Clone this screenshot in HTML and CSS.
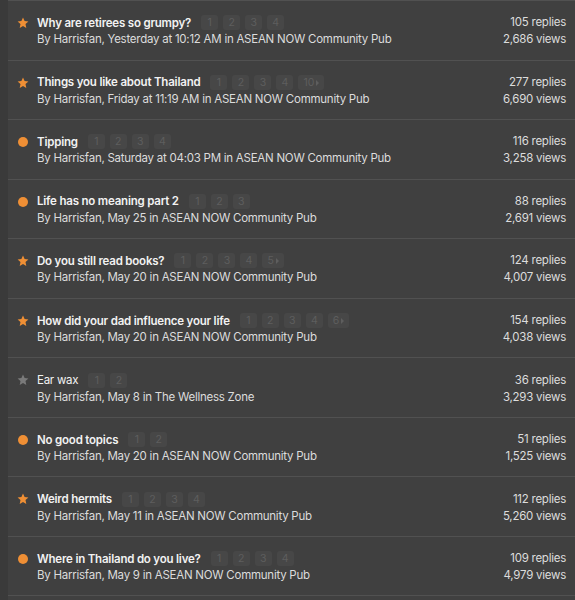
FILE: index.html
```html
<!DOCTYPE html>
<html>
	<head>
		<title>Topics by Harrisfan</title>
		<link rel="stylesheet" href="styles.css">
	</head>
	<body>
		<div class="wrap">
			<ul class="topics">
				<li class="topic">
					<span class="mark star"><svg viewBox="0 0 12 12"><path d="M6 .6l1.6 3.5 3.8.4-2.9 2.6.8 3.8L6 9l-3.3 1.9.8-3.8L.6 4.5l3.8-.4z"/></svg></span>
					<div class="main">
						<div class="title"><a href="#">Why are retirees so grumpy?</a>
							<span class="pages"><span>1</span><span>2</span><span>3</span><span>4</span></span>
						</div>
						<div class="meta">By Harrisfan, Yesterday at 10:12 AM in ASEAN NOW Community Pub</div>
					</div>
					<div class="stats"><div>105 replies</div><div>2,686 views</div></div>
				</li>
				<li class="topic">
					<span class="mark star"><svg viewBox="0 0 12 12"><path d="M6 .6l1.6 3.5 3.8.4-2.9 2.6.8 3.8L6 9l-3.3 1.9.8-3.8L.6 4.5l3.8-.4z"/></svg></span>
					<div class="main">
						<div class="title"><a href="#">Things you like about Thailand</a>
							<span class="pages"><span>1</span><span>2</span><span>3</span><span>4</span><span class="last">10<i></i></span></span>
						</div>
						<div class="meta">By Harrisfan, Friday at 11:19 AM in ASEAN NOW Community Pub</div>
					</div>
					<div class="stats"><div>277 replies</div><div>6,690 views</div></div>
				</li>
				<li class="topic">
					<span class="mark dot"></span>
					<div class="main">
						<div class="title"><a href="#">Tipping</a>
							<span class="pages"><span>1</span><span>2</span><span>3</span><span>4</span></span>
						</div>
						<div class="meta">By Harrisfan, Saturday at 04:03 PM in ASEAN NOW Community Pub</div>
					</div>
					<div class="stats"><div>116 replies</div><div>3,258 views</div></div>
				</li>
				<li class="topic">
					<span class="mark dot"></span>
					<div class="main">
						<div class="title"><a href="#">Life has no meaning part 2</a>
							<span class="pages"><span>1</span><span>2</span><span>3</span></span>
						</div>
						<div class="meta">By Harrisfan, May 25 in ASEAN NOW Community Pub</div>
					</div>
					<div class="stats"><div>88 replies</div><div>2,691 views</div></div>
				</li>
				<li class="topic">
					<span class="mark star"><svg viewBox="0 0 12 12"><path d="M6 .6l1.6 3.5 3.8.4-2.9 2.6.8 3.8L6 9l-3.3 1.9.8-3.8L.6 4.5l3.8-.4z"/></svg></span>
					<div class="main">
						<div class="title"><a href="#">Do you still read books?</a>
							<span class="pages"><span>1</span><span>2</span><span>3</span><span>4</span><span class="last">5<i></i></span></span>
						</div>
						<div class="meta">By Harrisfan, May 20 in ASEAN NOW Community Pub</div>
					</div>
					<div class="stats"><div>124 replies</div><div>4,007 views</div></div>
				</li>
				<li class="topic">
					<span class="mark star"><svg viewBox="0 0 12 12"><path d="M6 .6l1.6 3.5 3.8.4-2.9 2.6.8 3.8L6 9l-3.3 1.9.8-3.8L.6 4.5l3.8-.4z"/></svg></span>
					<div class="main">
						<div class="title"><a href="#">How did your dad influence your life</a>
							<span class="pages"><span>1</span><span>2</span><span>3</span><span>4</span><span class="last">6<i></i></span></span>
						</div>
						<div class="meta">By Harrisfan, May 20 in ASEAN NOW Community Pub</div>
					</div>
					<div class="stats"><div>154 replies</div><div>4,038 views</div></div>
				</li>
				<li class="topic read">
					<span class="mark star grey"><svg viewBox="0 0 12 12"><path d="M6 .6l1.6 3.5 3.8.4-2.9 2.6.8 3.8L6 9l-3.3 1.9.8-3.8L.6 4.5l3.8-.4z"/></svg></span>
					<div class="main">
						<div class="title"><a href="#">Ear wax</a>
							<span class="pages"><span>1</span><span>2</span></span>
						</div>
						<div class="meta">By Harrisfan, May 8 in The Wellness Zone</div>
					</div>
					<div class="stats"><div>36 replies</div><div>3,293 views</div></div>
				</li>
				<li class="topic">
					<span class="mark dot"></span>
					<div class="main">
						<div class="title"><a href="#">No good topics</a>
							<span class="pages"><span>1</span><span>2</span></span>
						</div>
						<div class="meta">By Harrisfan, May 20 in ASEAN NOW Community Pub</div>
					</div>
					<div class="stats"><div>51 replies</div><div>1,525 views</div></div>
				</li>
				<li class="topic">
					<span class="mark star"><svg viewBox="0 0 12 12"><path d="M6 .6l1.6 3.5 3.8.4-2.9 2.6.8 3.8L6 9l-3.3 1.9.8-3.8L.6 4.5l3.8-.4z"/></svg></span>
					<div class="main">
						<div class="title"><a href="#">Weird hermits</a>
							<span class="pages"><span>1</span><span>2</span><span>3</span><span>4</span></span>
						</div>
						<div class="meta">By Harrisfan, May 11 in ASEAN NOW Community Pub</div>
					</div>
					<div class="stats"><div>112 replies</div><div>5,260 views</div></div>
				</li>
				<li class="topic">
					<span class="mark dot"></span>
					<div class="main">
						<div class="title"><a href="#">Where in Thailand do you live?</a>
							<span class="pages"><span>1</span><span>2</span><span>3</span><span>4</span></span>
						</div>
						<div class="meta">By Harrisfan, May 9 in ASEAN NOW Community Pub</div>
					</div>
					<div class="stats"><div>109 replies</div><div>4,979 views</div></div>
				</li>
			</ul>
		</div>
	</body>
</html>
```
FILE: styles.css
```css
html,
body {
	margin:0;
	padding:0;
	background:#3a3a3a;
}
body {
	font-family:Inter, "Noto Sans", Arial, sans-serif;
	font-size:11.5px;
	letter-spacing:-0.25px;
	color:#dcdcdc;
}
.wrap {
	margin-left:8px;
	background:#404040;
	min-height:600px;
}
.topics {
	list-style:none;
	margin:0;
	padding:0;
	border-top:1px solid #515151;
}
.topic {
	display:flex;
	align-items:center;
	box-sizing:border-box;
	height:59.56px;
	padding:2px 9px 0 0;
	border-bottom:1px solid #515151;
}
.mark {
	width:29px;
	display:flex;
	justify-content:center;
	align-self:flex-start;
	margin-top:14px;
}
.star svg {
	width:12px;
	height:12px;
	fill:#ef8f35;
}
.star.grey svg {
	fill:#7a7a7a;
}
.dot::before {
	content:"";
	width:10px;
	height:10px;
	border-radius:50%;
	background:#ef8f35;
	margin-top:1px;
}
.main {
	flex:1;
}
.title {
	display:flex;
	align-items:center;
	height:17px;
}
.title a {
	color:#f2f2f2;
	font-weight:600;
	letter-spacing:-0.2px;
	text-decoration:none;
}
.read .title a {
	font-weight:400;
	letter-spacing:-0.25px;
}
.pages {
	display:flex;
	gap:5px;
	margin-left:10px;
	letter-spacing:0;
}
.pages span {
	min-width:17px;
	height:15px;
	padding:0 1px;
	box-sizing:border-box;
	border-radius:3px;
	background:#474747;
	color:#5e5e5e;
	font-size:10.5px;
	line-height:15px;
	text-align:center;
}
.pages .last {
	padding:0 5px;
}
.pages .last i {
	display:inline-block;
	border-left:3px solid #5e5e5e;
	border-top:3px solid transparent;
	border-bottom:3px solid transparent;
	margin-left:2px;
}
.meta {
	line-height:17px;
}
.stats {
	text-align:right;
	line-height:17px;
}
```
